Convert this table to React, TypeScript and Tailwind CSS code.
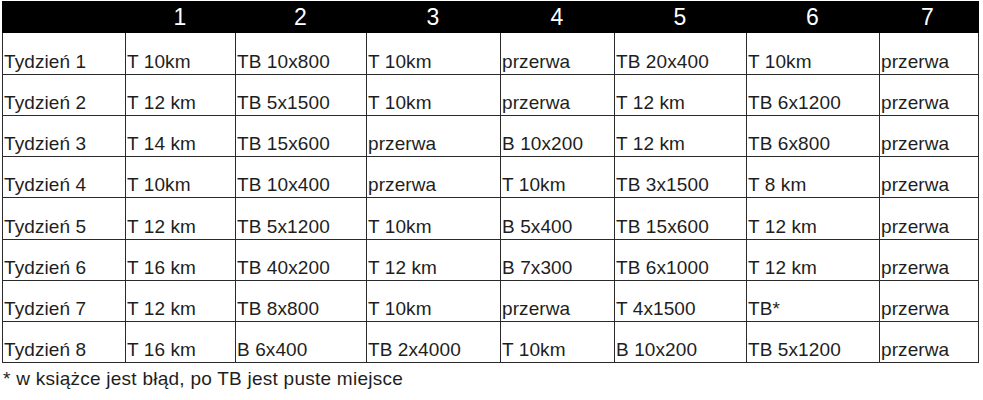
const cols = ['w-[123px]', 'w-[110px]', 'w-[131px]', 'w-[134px]', 'w-[114px]', 'w-[132px]', 'w-[133px]', 'w-[97px]'];

const rows: string[][] = [
  ['Tydzień 1', 'T 10km', 'TB 10x800', 'T 10km', 'przerwa', 'TB 20x400', 'T 10km', 'przerwa'],
  ['Tydzień 2', 'T 12 km', 'TB 5x1500', 'T 10km', 'przerwa', 'T 12 km', 'TB 6x1200', 'przerwa'],
  ['Tydzień 3', 'T 14 km', 'TB 15x600', 'przerwa', 'B 10x200', 'T 12 km', 'TB 6x800', 'przerwa'],
  ['Tydzień 4', 'T 10km', 'TB 10x400', 'przerwa', 'T 10km', 'TB 3x1500', 'T 8 km', 'przerwa'],
  ['Tydzień 5', 'T 12 km', 'TB 5x1200', 'T 10km', 'B 5x400', 'TB 15x600', 'T 12 km', 'przerwa'],
  ['Tydzień 6', 'T 16 km', 'TB 40x200', 'T 12 km', 'B 7x300', 'TB 6x1000', 'T 12 km', 'przerwa'],
  ['Tydzień 7', 'T 12 km', 'TB 8x800', 'T 10km', 'przerwa', 'T 4x1500', 'TB*', 'przerwa'],
  ['Tydzień 8', 'T 16 km', 'B 6x400', 'TB 2x4000', 'T 10km', 'B 10x200', 'TB 5x1200', 'przerwa'],
];

// row heights incl. bottom border, so lines land where the sheet has them
const heights = ['h-[42px]', 'h-[41px]', 'h-[41px]', 'h-[41px]', 'h-[42px]', 'h-[41px]', 'h-[41px]', 'h-[41px]'];

export default function App() {
  return (
    <div className="min-h-[400px] w-[983px] bg-white font-['Liberation_Sans',Arial,sans-serif] text-[#1e1e1e]">
      <div className="ml-[2px] pt-[1px]">
        {/* header */}
        <div className="flex h-[32px] w-[977px] bg-black text-[23px] text-white">
          {cols.map((w, i) => (
            <div key={i} className={`${w} flex items-center justify-center pt-[1px]`}>
              {i === 0 ? '' : i}
            </div>
          ))}
        </div>

        {/* body */}
        <div className="w-[977px] border-l border-r border-[#2a2a2a]">
          {rows.map((row, r) => (
            <div key={r} className={`flex ${heights[r]} border-b border-[#2a2a2a]`}>
              {row.map((cell, c) => (
                <div
                  key={c}
                  className={`${c === 0 ? 'w-[122px]' : cols[c]} ${
                    c > 0 ? 'border-l border-[#2a2a2a]' : ''
                  } flex items-end pb-[1px] pl-[1px] text-[19px] leading-[22px] tracking-[0.1px]`}
                >
                  {cell}
                </div>
              ))}
            </div>
          ))}
        </div>

        <p className="mt-[5px] pl-[1px] text-[19px] leading-[22px] tracking-[0.25px]">
          * w książce jest błąd, po TB jest puste miejsce
        </p>
      </div>
    </div>
  );
}
